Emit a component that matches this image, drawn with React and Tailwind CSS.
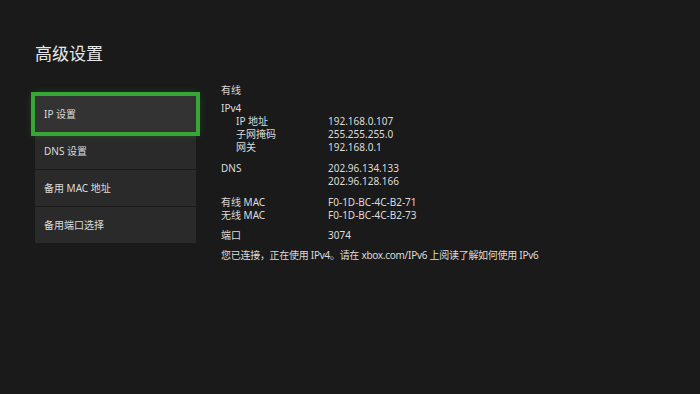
import React from 'react'

const MENU = ['IP 设置', 'DNS 设置', '备用 MAC 地址', '备用端口选择']

function Row({ label, value, indent }) {
  return (
    <div className="flex h-[13px] items-center">
      <div className={indent ? 'w-[107px] pl-[15px]' : 'w-[107px]'}>{label}</div>
      <div>{value}</div>
    </div>
  )
}

export default function App() {
  return (
    <div
      className="w-[700px] h-[394px] bg-[#1a1a1a] text-[#dcdcdc] overflow-hidden"
      style={{ fontFamily: '"Noto Sans", "Noto Sans CJK SC", sans-serif' }}
    >
      <div className="pl-[35px] pt-[42px] text-[17px] leading-[24px] text-[#e8e8e8]">高级设置</div>
      <div className="flex pl-[35px] mt-[18px]">
        <div className="flex flex-col gap-px pt-[12px] w-[161px]">
          {MENU.map((m, i) => (
            <div
              key={m}
              className={
                i === 0
                  ? 'h-[36px] flex items-center pl-[9px] text-[10px] bg-[#333333] outline-4 outline-[#36a636] shadow-[0_0_8px_2px_rgba(40,160,40,0.45)] relative z-10'
                  : 'h-[36px] flex items-center pl-[9px] text-[10px] bg-[#2a2a2a]'
              }
            >
              {m}
            </div>
          ))}
        </div>
        <div className="ml-[25px] text-[10px] leading-[13px]">
          <div className="h-[13px] flex items-center">有线</div>
          <div className="mt-[5px]">
            <Row label="IPv4" value="" />
            <Row label="IP 地址" value="192.168.0.107" indent />
            <Row label="子网掩码" value="255.255.255.0" indent />
            <Row label="网关" value="192.168.0.1" indent />
          </div>
          <div className="mt-[8px]">
            <Row label="DNS" value="202.96.134.133" />
            <Row label="" value="202.96.128.166" />
          </div>
          <div className="mt-[8px]">
            <Row label="有线 MAC" value="F0-1D-BC-4C-B2-71" />
            <Row label="无线 MAC" value="F0-1D-BC-4C-B2-73" />
          </div>
          <div className="mt-[7px]">
            <Row label="端口" value="3074" />
          </div>
          <div className="mt-[7px] h-[13px] flex items-center whitespace-nowrap tracking-[-0.28px]">
            您已连接，正在使用 IPv4。请在 xbox.com/IPv6 上阅读了解如何使用 IPv6
          </div>
        </div>
      </div>
    </div>
  )
}
